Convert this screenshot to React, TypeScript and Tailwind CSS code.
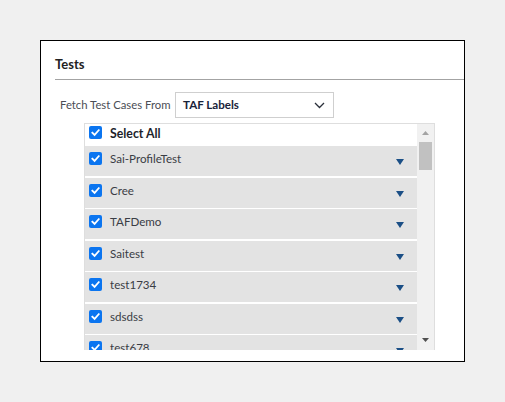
import React from "react";

const items = ["Sai-ProfileTest", "Cree", "TAFDemo", "Saitest", "test1734", "sdsdss", "test678"];

function Check() {
  return (
    <div className="w-[13px] h-[13px] rounded-[2px] bg-[#0b75f0] flex items-center justify-center shrink-0">
      <svg width="9" height="9" viewBox="0 0 10 10">
        <path d="M1.5 5.2 L4 7.6 L8.6 2.4" stroke="white" strokeWidth="2" fill="none" strokeLinecap="square" />
      </svg>
    </div>
  );
}

export default function App() {
  return (
    <div className="w-[505px] h-[402px] bg-[#f0f0f0] pt-[40px] pl-[40px]" style={{ fontFamily: 'Lato, "Open Sans", sans-serif' }}>
      <div className="w-[425px] h-[322px] bg-white border border-black flex flex-col">
        <div className="pl-[14px] pt-[14px]">
          <div className="text-[13px] leading-[18px] font-bold text-[#222]">Tests</div>
          <div className="mt-[6px] h-px bg-[#a3a3a3]" />
        </div>
        <div className="flex items-center mt-[12px] pl-[19px]">
          <div className="w-[115px] whitespace-nowrap text-[11.3px] leading-[16px] text-[#4a4d55]">Fetch Test Cases From</div>
          <div className="w-[159px] h-[26px] border border-[#cfcfcf] flex items-center justify-between pl-[7px] pr-[8px]">
            <span className="text-[11.6px] font-bold text-[#18233a]">TAF Labels</span>
            <svg width="11" height="7" viewBox="0 0 11 7">
              <path d="M1 1 L5.5 5.5 L10 1" stroke="#2a2f3a" strokeWidth="1.3" fill="none" />
            </svg>
          </div>
        </div>
        <div className="ml-[43px] mt-[5px] w-[351px] h-[227px] border border-[#dedede] border-b-0 flex overflow-hidden">
          <div className="flex-1 flex flex-col overflow-hidden">
            <div className="h-[22px] shrink-0 flex items-start pl-[4px] pt-[2px] gap-[8px] bg-white">
              <Check />
              <span className="mt-[1px] text-[12.3px] leading-[14px] font-bold text-[#1d1f2b]">Select All</span>
            </div>
            {items.map((it) => (
              <div key={it} className="h-[30px] shrink-0 mb-[1.5px] bg-[#e3e3e3] flex items-start pl-[4px] pr-[13px]">
                <div className="pt-[6px]"><Check /></div>
                <span className="ml-[8px] pt-[5px] text-[11.6px] leading-[16px] text-[#3a3d45] flex-1">{it}</span>
                <svg className="self-center mt-[2px]" width="8" height="6" viewBox="0 0 8 6">
                  <path d="M0 0 L8 0 L4 6 Z" fill="#1b4f86" />
                </svg>
              </div>
            ))}
          </div>
          <div className="w-[17px] bg-[#f1f1f1] flex flex-col items-center relative">
            <svg className="mt-[7px]" width="7" height="4" viewBox="0 0 7 4">
              <path d="M0 4 L7 4 L3.5 0 Z" fill="#a3a3a3" />
            </svg>
            <div className="mt-[7px] w-[13px] h-[28px] bg-[#c1c1c1]" />
            <svg className="absolute bottom-[8px]" width="7" height="4" viewBox="0 0 7 4">
              <path d="M0 0 L7 0 L3.5 4 Z" fill="#505050" />
            </svg>
          </div>
        </div>
      </div>
    </div>
  );
}
